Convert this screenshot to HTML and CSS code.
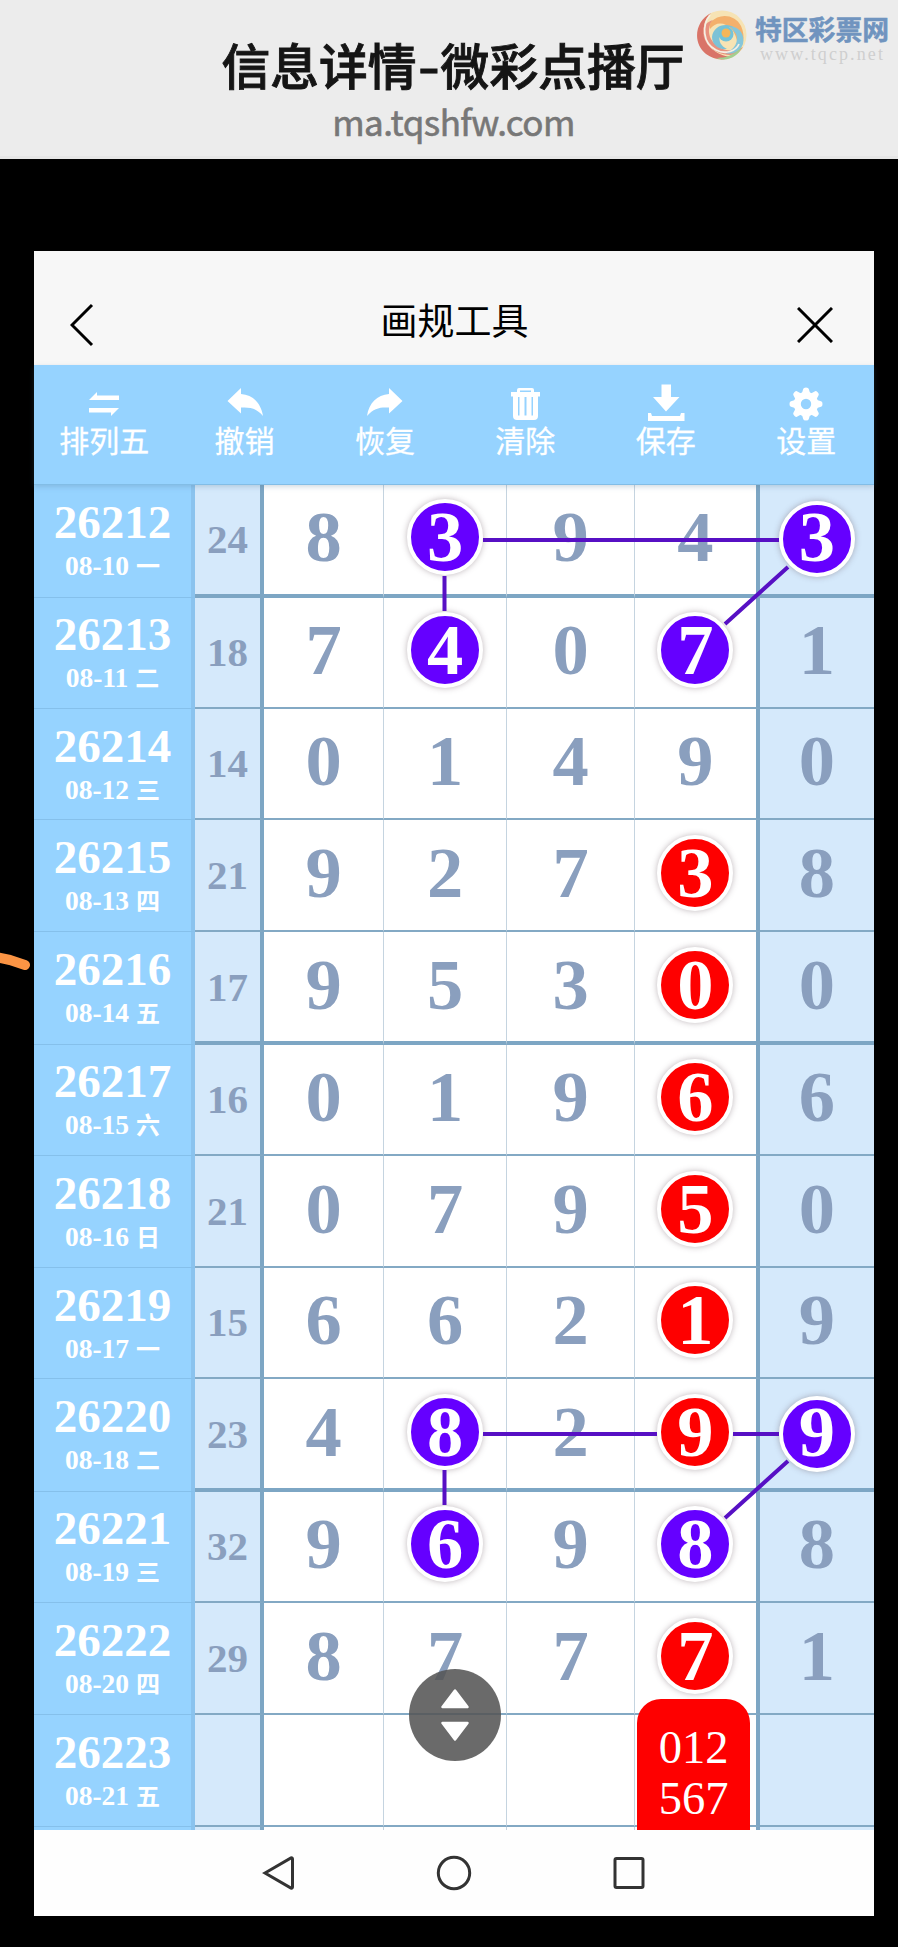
FILE: index.html
```html
<!DOCTYPE html>
<html lang="zh-CN">
<head>
<meta charset="utf-8">
<title>信息详情-微彩点播厅</title>
<link rel="stylesheet" href="styles.css">
</head>
<body>
<header class="site-head">
  <h1 class="site-title">信息详情<span class="dash">-</span>微彩点播厅</h1>
  <p class="site-url">ma.tqshfw.com</p>
  <div class="watermark">
    <svg class="wm-logo" viewBox="-26 -27 52 54" width="52" height="54">
      <circle r="24.500" fill="#f6e3b4"/>
      <path d="M-11-22C-27-14-30 8-16 19C-8 25 2 26 9 22C-6 20-17 11-18-2C-19-11-16-17-11-22Z" fill="#d97468"/>
      <path d="M-19-6C-20 8-9 19 8 20C14 20 18 17 21 12C10 19-5 15-11 4C-14-2-14-9-9-15C-15-13-18-10-19-6Z" fill="#e8927f"/>
      <path d="M-11-13C-3-22 13-21 19-9C24 2 21 12 15 17C17 6 13-6 4-10C-2-13-8-11-12-6C-13-9-12-11-11-13Z" fill="#f3b06c"/>
      <path d="M8-9C18-8 23 0 21 9C18 17 10 20 3 18C13 15 17 6 14-1Z" fill="#86c6da"/>
      <path d="M20 12C16 22 5 27-6 23C4 23 12 20 20 12Z" fill="#a3ce8f"/>
      <path d="M11-8C2-13-9-8-10 2C-10 10-3 15 5 14C-1 11-4 6-2 0C0-5 5-8 11-8Z" fill="#7cc2d6"/>
      <circle cx="4" cy="-1" r="7.500" fill="#74c3d8"/>
      <circle cx="4" cy="-2" r="4.500" fill="#f5b659"/>
      <path d="M-12-20C-20-10-20 8-6 15C4 20 14 16 17 9" fill="none" stroke="#f5efe4" stroke-width="1.800"/>
    </svg>
    <div class="wm-text">
      <span class="wm-name">特区彩票网</span>
      <span class="wm-url">www.tqcp.net</span>
    </div>
  </div>
</header>

<main class="phone">
  <div class="titlebar">
    <svg width="24" height="44" viewBox="0 0 24 44"><path d="M22 2L2 22L22 42" fill="none" stroke="#000" stroke-width="3"/></svg>
    <h2 class="tool-title">画规工具</h2>
    <svg width="36" height="36" viewBox="0 0 36 36"><path d="M1 1L35 35M35 1L1 35" fill="none" stroke="#000" stroke-width="3"/></svg>
  </div>

  <nav class="toolbar">
    <div class="tool"><svg viewBox="-20 -20 40 40"><path d="M-15-4L-7-12V-8.500H15V-4ZM15 4L7 12V8.500H-15V4Z"/></svg><span>排列五</span></div>
    <div class="tool"><svg viewBox="-20 -20 40 40"><path d="M-17.500-3L-4-16V-10C8-9 16-1 18 12C11 4 5 3-4 3.500V9.500Z"/></svg><span>撤销</span></div>
    <div class="tool"><svg viewBox="-20 -20 40 40"><path d="M17.500-3L4-16V-10C-8-9-16-1-18 12C-11 4-5 3 4 3.500V9.500Z"/></svg><span>恢复</span></div>
    <div class="tool"><svg viewBox="-20 -20 40 40"><path fill-rule="evenodd" d="M-8-12V-14Q-8-16-6-16H7Q9-16 9-14V-12H15V-7.500H13V12Q13 16 9 16H-8Q-12 16-12 12V-7.500H-14V-12ZM-5-12H6V-13.500H-5ZM-7-7V11.500H-5.500V-7ZM-.500-7V11.500H1.500V-7ZM6.500-7V11.500H8V-7Z"/></svg><span>清除</span></div>
    <div class="tool"><svg viewBox="-20 -20 40 40"><path d="M-4.500-19.500H5V-7H13.500L0 7.500L-13-7H-4.500ZM-18 9H-15L-14 12H14L15 9H18.500V17H-18Z"/></svg><span>保存</span></div>
    <div class="tool"><svg viewBox="-20 -20 40 40"><circle r="8.700" fill="none" stroke="#fff" stroke-width="7"/><g id="teeth"><path id="tooth" d="M-4-11L-2.800-15Q-2.600-16.500 0-16.500Q2.600-16.500 2.800-15L4-11Z"/><use href="#tooth" transform="rotate(45)"/><use href="#tooth" transform="rotate(90)"/><use href="#tooth" transform="rotate(135)"/></g><use href="#teeth" transform="rotate(180)"/></svg><span>设置</span></div>
  </nav>

  <section class="chart">
    <div id="rows"></div>
    <svg class="links" width="840" height="1345" viewBox="34 485 840 1345">
      <path d="M483 540H779M444.500 576V611M788 567L725 624M483 1434H657M733 1434H779M444.500 1470V1505M788 1461L725 1518"/>
    </svg>
    <div class="pick">012<br>567</div>
    <div class="scroller">
      <svg width="92" height="92" viewBox="-46 -46 92 92"><path d="M0-24.500L12.500-8H-12.500ZM0 24.500L12.500 8H-12.500Z" fill="#fff" stroke="#fff" stroke-width="2.500" stroke-linejoin="round"/></svg>
    </div>
  </section>

  <footer class="sysnav">
    <svg width="34" height="38" viewBox="0 0 34 38"><path d="M3 19L29 4Q30.500 3.500 30.500 5V33Q30.500 34.500 29 34Z"/></svg>
    <svg width="36" height="36" viewBox="0 0 36 36"><circle cx="18" cy="18" r="15.700"/></svg>
    <svg width="34" height="34" viewBox="0 0 34 34"><rect x="3" y="2.500" width="28" height="29" rx="1.500"/></svg>
  </footer>
</main>
<script src="chart.js"></script>
</body>
</html>
```
FILE: styles.css
```css
* { box-sizing: border-box; }
body {
  margin: 0;
  height: 1947px;
  overflow: hidden;
  background: #000;
  font-family: "Noto Sans CJK SC", sans-serif;
}
h1, h2, p { margin: 0; }

.site-head {
  position: relative;
  height: 159px;
  padding-top: 31px;
  background: #ececec;
  border-bottom: 3px solid #e6e6e6;
}
.site-title {
  width: 474px;
  margin: -2px 0 0 216px;
  text-align: center;
  font-size: 48.800px;
  line-height: 70px;
  font-weight: 500;
  -webkit-text-stroke: .9px #151515;
  color: #151515;
  white-space: nowrap;
}
.dash { display: inline-block; width: 24px; text-align: center; transform: scaleX(1.250); }
.site-url {
  padding-left: 9px;
  font-size: 35px;
  line-height: 44px;
  letter-spacing: -.550px;
  text-align: center;
  -webkit-text-stroke: .6px #777;
  color: #777;
}
.watermark {
  position: absolute;
  top: 8px;
  left: 696px;
  display: flex;
  gap: 7px;
}
.wm-text { display: flex; flex-direction: column; text-align: left; padding-top: 6px; }
.wm-name { font-size: 26.800px; line-height: 30px; font-weight: 700; -webkit-text-stroke: .5px #7094bf; color: #7094bf; white-space: nowrap; }
.wm-url {
  padding: 1px 0 0 5px;
  font: 18px/18px "Liberation Serif", serif;
  letter-spacing: 2.100px;
  color: #cfcfcf;
}

.phone {
  width: 840px;
  height: 1665px;
  margin: 92px 0 0 34px;
  background: #fefefe;
}
.titlebar {
  display: flex;
  align-items: center;
  justify-content: space-between;
  height: 114px;
  padding: 33px 41px 0 36px;
  background: #f7f7f7;
}
.tool-title { font-size: 37px; line-height: 50px; font-weight: 400; color: #000; margin: -12px 0 0 18px; }

.toolbar {
  position: relative;
  z-index: 2;
  display: grid;
  grid-template-columns: repeat(6, 140.400px);
  height: 120px;
  padding-top: 19px;
  background: #96d3ff;
  border-bottom: 1px solid #82bde6;
  box-shadow: 0 2px 5px rgba(80, 110, 140, .25);
}
.tool { display: flex; flex-direction: column; align-items: center; color: #fff; font-size: 30px; line-height: 30px; -webkit-text-stroke: .3px #fff; }
.tool svg { width: 40px; height: 40px; fill: #fff; }

.chart { position: relative; height: 1345px; overflow: hidden; }
.row {
  position: relative;
  display: grid;
  grid-template-columns: 161px 69px 120px 123px 128px 124.500px 114.500px;
  height: 111.800px;
}
.row > div { border-bottom: 2px solid #83a9c4; }
.row.thick { z-index: 1; }
.row.thick > div { border-bottom: 4px solid #7da6c4; margin-bottom: -1px; }
.issue, .row.thick > .issue {
  display: flex;
  flex-direction: column;
  align-items: center;
  padding-top: 12px;
  border-right: 4px solid #8bc3ee;
  background: #96d3ff;
  color: #fff;
  font: 700 47px/50px "Liberation Serif", serif;
}
.row > .issue, .row.thick > .issue { border-bottom: 1px solid #85c0eb; }
.date { display: flex; gap: 7px; font-size: 27.500px; line-height: 38px; }
.date b { font: 700 24px/35px "Noto Sans CJK SC", sans-serif; }
.sum, .cell { display: flex; align-items: center; justify-content: center; font-family: "Liberation Serif", serif; font-weight: 700; color: #8a9fbe; }
.sum { background: #d5e9fb; border-right: 4.500px solid #7da6c4; font-size: 41px; }
.cell { font-size: 72.500px; line-height: 72px; border-right: 1.500px solid #c5d4e0; background: #fff; padding-bottom: 4px; }
.cell.c3 { border-right: 4.500px solid #7da6c4; }
.cell.c4 { background: #d5e9fb; border-right: 0; }
.ball {
  display: flex;
  align-items: center;
  justify-content: center;
  flex: none;
  width: 76px;
  height: 76px;
  border: 4px solid #fff;
  border-radius: 50%;
  background: #6500ff;
  color: #fff;
  box-shadow: 0 0 6px rgba(90, 70, 80, .4);
}
.ball.red { background: #fe0000; }
.c4 .ball { margin-top: 4px; padding-bottom: 4px; }

.links { position: absolute; left: 0; top: 0; z-index: 2; fill: none; stroke: #5710c4; stroke-width: 4; }
.pick {
  position: absolute;
  z-index: 2;
  left: 603px;
  top: 1214px;
  width: 113px;
  height: 131px;
  padding-top: 23px;
  border-radius: 24px 24px 0 0;
  background: #fe0000;
  color: #fff;
  text-align: center;
  font: 46.500px/51px "Liberation Serif", serif;
}
.scroller { position: absolute; z-index: 2; left: 375px; top: 1184px; width: 92px; height: 92px; border-radius: 50%; background: rgba(84, 84, 84, .87); }

.sysnav { display: flex; align-items: center; height: 86px; padding-left: 228px; gap: 140px; fill: none; stroke: #333; stroke-width: 3; }
```
FILE: chart.js
```js
// issue, date, weekday, sum, digits (p = purple ball, r = red ball)
const data = [
  ["26212", "08-10", "一", "24", "8 3p 9 4 3p"],
  ["26213", "08-11", "二", "18", "7 4p 0 7p 1"],
  ["26214", "08-12", "三", "14", "0 1 4 9 0"],
  ["26215", "08-13", "四", "21", "9 2 7 3r 8"],
  ["26216", "08-14", "五", "17", "9 5 3 0r 0"],
  ["26217", "08-15", "六", "16", "0 1 9 6r 6"],
  ["26218", "08-16", "日", "21", "0 7 9 5r 0"],
  ["26219", "08-17", "一", "15", "6 6 2 1r 9"],
  ["26220", "08-18", "二", "23", "4 8p 2 9r 9p"],
  ["26221", "08-19", "三", "32", "9 6p 9 8p 8"],
  ["26222", "08-20", "四", "29", "8 7 7 7r 1"],
  ["26223", "08-21", "五", "", ". . . . ."],
  ["", "", "", "", ". . . . ."]
];
const thick = new Set([0, 4, 8]);
document.getElementById("rows").innerHTML = data.map(([no, date, day, sum, nums], i) => {
  const cells = nums.split(" ").map((n, c) => {
    const d = n[0] === "." ? "" : n[0];
    const body = n[1] ? `<span class="ball${n[1] === "r" ? " red" : ""}">${d}</span>` : d;
    return `<div class="cell c${c}">${body}</div>`;
  }).join("");
  return `<div class="row${thick.has(i) ? " thick" : ""}"><div class="issue">${no}<span class="date">${date}<b>${day}</b></span></div><div class="sum">${sum}</div>${cells}</div>`;
}).join("");

// orange pen stroke left over at the page edge
const ns = "http://www.w3.org/2000/svg";
const svg = document.createElementNS(ns, "svg");
svg.setAttribute("class", "pen");
svg.setAttribute("width", "34");
svg.setAttribute("height", "24");
svg.innerHTML = '<path d="M-4 6L10 9L25 14" fill="none" stroke="#fb9444" stroke-width="10" stroke-linecap="round" stroke-linejoin="round"/>';
svg.style.cssText = "position:absolute;left:0;top:951px";
document.body.appendChild(svg);
```
